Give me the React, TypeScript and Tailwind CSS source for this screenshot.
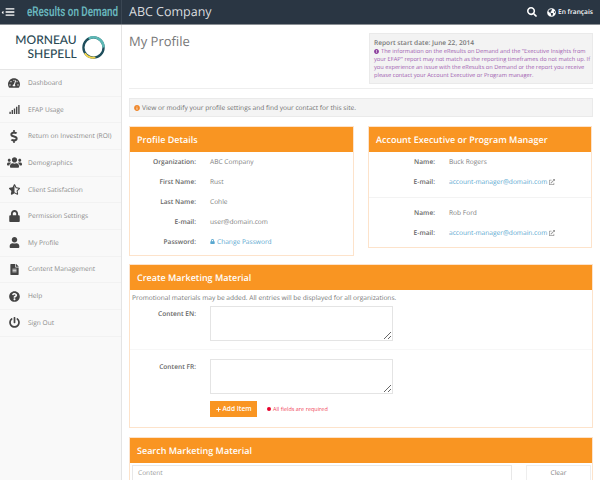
import {
  FaBars, FaCaretLeft, FaDollarSign, FaExclamationCircle, FaExternalLinkAlt, FaFileAlt, FaGlobeAmericas,
  FaInfoCircle, FaLock, FaPlus, FaPowerOff, FaQuestionCircle, FaSearch, FaSignal, FaStarHalfAlt,
  FaTachometerAlt, FaUser, FaUsers,
} from 'react-icons/fa';
import type { ReactNode } from 'react';

const nav = [
  { label: 'Dashboard', icon: <FaTachometerAlt className="w-[12px] h-[12px]" /> },
  { label: 'EFAP Usage', icon: <FaSignal className="w-[11px] h-[11px]" /> },
  { label: 'Return on Investment (ROI)', icon: <FaDollarSign className="w-[12px] h-[13px]" /> },
  { label: 'Demographics', icon: <FaUsers className="w-[15px] h-[13px]" /> },
  { label: 'Client Satisfaction', icon: <FaStarHalfAlt className="w-[11px] h-[11px]" /> },
  { label: 'Permission Settings', icon: <FaLock className="w-[11px] h-[12px]" /> },
  { label: 'My Profile', icon: <FaUser className="w-[11px] h-[11px]" /> },
  { label: 'Content Management', icon: <FaFileAlt className="w-[9px] h-[11px]" /> },
  { label: 'Help', icon: <FaQuestionCircle className="w-[11px] h-[11px]" /> },
  { label: 'Sign Out', icon: <FaPowerOff className="w-[11px] h-[11px]" /> },
];

function Panel({ title, className, children }: { title: string; className?: string; children: ReactNode }) {
  return (
    <section className={`border border-[#fde3cb] bg-white ${className ?? ''}`}>
      <h2 className="h-[25px] bg-[#f99522] pl-[7px] text-[9px] font-semibold leading-[25px] text-white">{title}</h2>
      {children}
    </section>
  );
}

function Field({ label, children }: { label: string; children: ReactNode }) {
  return (
    <div className="flex h-[20px] items-center text-[6.6px]">
      <span className="w-[66px] shrink-0 text-right font-semibold text-[#666]">{label}</span>
      <span className="ml-[14px] text-[#808080]">{children}</span>
    </div>
  );
}

function ManagerEmail() {
  return (
    <span className="flex items-center text-[#5aa8d0]">
      account-manager@domain.com
      <FaExternalLinkAlt className="ml-[2px] h-[6px] w-[6px] text-[#999]" />
    </span>
  );
}

function Logo() {
  return (
    <div className="flex h-[45px] items-center justify-center border-b border-[#e6e6e6] bg-white">
      <div className="text-right text-[12px] font-medium leading-[14px] text-[#2b4a55] [font-family:'Lato',sans-serif]">
        <div>MORNEAU</div>
        <div>SHEPELL</div>
      </div>
      <svg viewBox="0 0 26 26" className="ml-[4px] h-[25px] w-[25px]">
        <circle cx="13" cy="13" r="10.5" fill="none" stroke="#1f4e5c" strokeWidth="2.4" />
        <path d="M8 3.8A10.5 10.5 0 0 1 23.5 13" fill="none" stroke="#5db8b5" strokeWidth="2.6" />
        <path d="M4 19A10.5 10.5 0 0 0 15 23.3" fill="none" stroke="#f2d54b" strokeWidth="2" />
      </svg>
    </div>
  );
}

export default function App() {
  return (
    <div className="flex h-[480px] w-[600px] flex-col overflow-hidden bg-white [font-family:'Open_Sans',sans-serif] [text-rendering:geometricPrecision]">
      <header className="flex h-[25px] shrink-0 items-center border-b border-[#8a8f94] bg-[#2a3643] text-white">
        <div className="flex h-full w-[122px] shrink-0 items-center border-r border-[#3a4653]">
          <FaCaretLeft className="ml-px h-[5px] w-[3px] shrink-0" />
          <FaBars className="ml-[1px] h-[10px] w-[10px] shrink-0" />
          <span className="ml-[12px] inline-block shrink-0 origin-left scale-x-[0.73] whitespace-nowrap text-[13.5px] font-semibold text-[#68b5bd] [font-family:'Roboto',sans-serif]">
            eResults on Demand
          </span>
        </div>
        <span className="ml-[7px] text-[12.5px] text-[#d9dcdf]">ABC Company</span>
        <FaSearch className="ml-auto h-[10px] w-[10px]" />
        <FaGlobeAmericas className="ml-[10px] h-[9px] w-[9px]" />
        <span className="ml-[2px] mr-[7px] text-[6.6px] font-semibold">En français</span>
      </header>

      <div className="flex min-h-0 flex-1">
        <aside className="w-[122px] shrink-0 border-r border-[#e4e4e4] bg-[#f9f9f9]">
          <Logo />
          <nav>
            {nav.map((item) => (
              <div key={item.label} className="flex h-[26.67px] items-center border-b border-[#f2f2f2] text-[6.6px] text-[#8a8a8a] whitespace-nowrap">
                <span className="flex w-[28px] shrink-0 justify-center text-[#444]">{item.icon}</span>
                {item.label}
              </div>
            ))}
          </nav>
        </aside>

        <main className="min-w-0 flex-1 px-[7px] pt-[8px]">
          <div className="flex h-[56px] items-start justify-between border-b border-[#eee]">
            <h1 className="text-[13px] leading-[16px] text-[#777]">My Profile</h1>
            <div className="h-[51px] w-[224px] border border-[#eaeaea] bg-[#f3f3f3] pl-[4px] pt-[4px] text-[#a05cb0] text-[5.7px] leading-[8px]">
              <div className="text-[6.6px] font-semibold leading-[9px] text-[#777]">Report start date: June 22, 2014</div>
              <FaExclamationCircle className="mr-[2px] inline h-[5px] w-[5px] align-[-0.5px] text-[#8d3f9e]" />
              The information on the eResults on Demand and the "Executive Insights from your EFAP" report may not match as the reporting timeframes do not match up. If you experience an issue with the eResults on Demand or the report you receive please contact your Account Executive or Program manager.
            </div>
          </div>

          <div className="mt-[9px] flex h-[19px] items-center border border-[#eaeaea] bg-[#f4f4f4] pl-[4px] text-[6.6px] text-[#707070]">
            <FaInfoCircle className="mr-[2px] h-[6px] w-[6px] text-[#f0872a]" />
            View or modify your profile settings and find your contact for this site.
          </div>

          <div className="mt-[9px] flex items-start gap-[14px]">
            <Panel title="Profile Details" className="h-[130px] w-[225px]">
              <Field label="Organization:">ABC Company</Field>
              <Field label="First Name:">Rust</Field>
              <Field label="Last Name:">Cohle</Field>
              <Field label="E-mail:">user@domain.com</Field>
              <Field label="Password:">
                <span className="flex items-center text-[#5aa8d0]">
                  <FaLock className="mr-[2px] h-[5px] w-[5px]" />
                  Change Password
                </span>
              </Field>
            </Panel>

            <Panel title="Account Executive or Program Manager" className="h-[122px] w-[224px]">
              <Field label="Name:">Buck Rogers</Field>
              <Field label="E-mail:"><ManagerEmail /></Field>
              <div className="mb-[1px] mt-[5px] h-px bg-[#f3f3f3]" />
              <div className="pt-[4px]">
                <Field label="Name:">Rob Ford</Field>
                <Field label="E-mail:"><ManagerEmail /></Field>
              </div>
            </Panel>
          </div>

          <Panel title="Create Marketing Material" className="mt-[8px] h-[164px]">
            <p className="pl-[2px] pt-[3px] text-[6.6px] leading-[10px] text-[#777]">
              Promotional materials may be added. All entries will be displayed for all organizations.
            </p>
            <div className="flex h-[44px] pt-[3px]">
              <span className="w-[66px] shrink-0 pt-[3px] text-right text-[6.6px] font-semibold text-[#666]">Content EN:</span>
              <textarea className="ml-[14px] h-[35px] w-[183px] border border-[#e4e4e4] bg-white" />
            </div>
            <div className="mt-[2px] border-t border-[#f7f7f7] pt-[9px]">
              <div className="flex">
                <span className="w-[66px] shrink-0 pt-[3px] text-right text-[6.6px] font-semibold text-[#666]">Content FR:</span>
                <textarea className="ml-[14px] h-[35px] w-[183px] border border-[#e4e4e4] bg-white" />
              </div>
            </div>
            <div className="ml-[80px] mt-[7px] flex items-center">
              <button className="flex h-[16px] w-[47px] items-center justify-center bg-[#f99522] text-[6.6px] font-semibold text-white">
                <FaPlus className="mr-[2px] h-[5px] w-[5px]" />
                Add Item
              </button>
              <span className="ml-[10px] flex items-center text-[5.5px] text-[#f0435a]">
                <span className="mr-[2px] h-[4px] w-[4px] rounded-full bg-[#e8002c]" />
                All fields are required
              </span>
            </div>
          </Panel>

          <Panel title="Search Marketing Material" className="mt-[9px] h-[60px]">
            <div className="flex pl-[2px] pt-[2px]">
              <div className="h-[30px] w-[380px] border border-[#e8e8e8] pl-[5px] pt-[2px] text-[6.6px] text-[#9a9a9a]">Content</div>
              <div className="ml-[14px] h-[30px] w-[65px] border border-[#eee] pt-[2px] text-center text-[6.6px] text-[#808080]">Clear</div>
            </div>
          </Panel>
        </main>
      </div>
    </div>
  );
}
